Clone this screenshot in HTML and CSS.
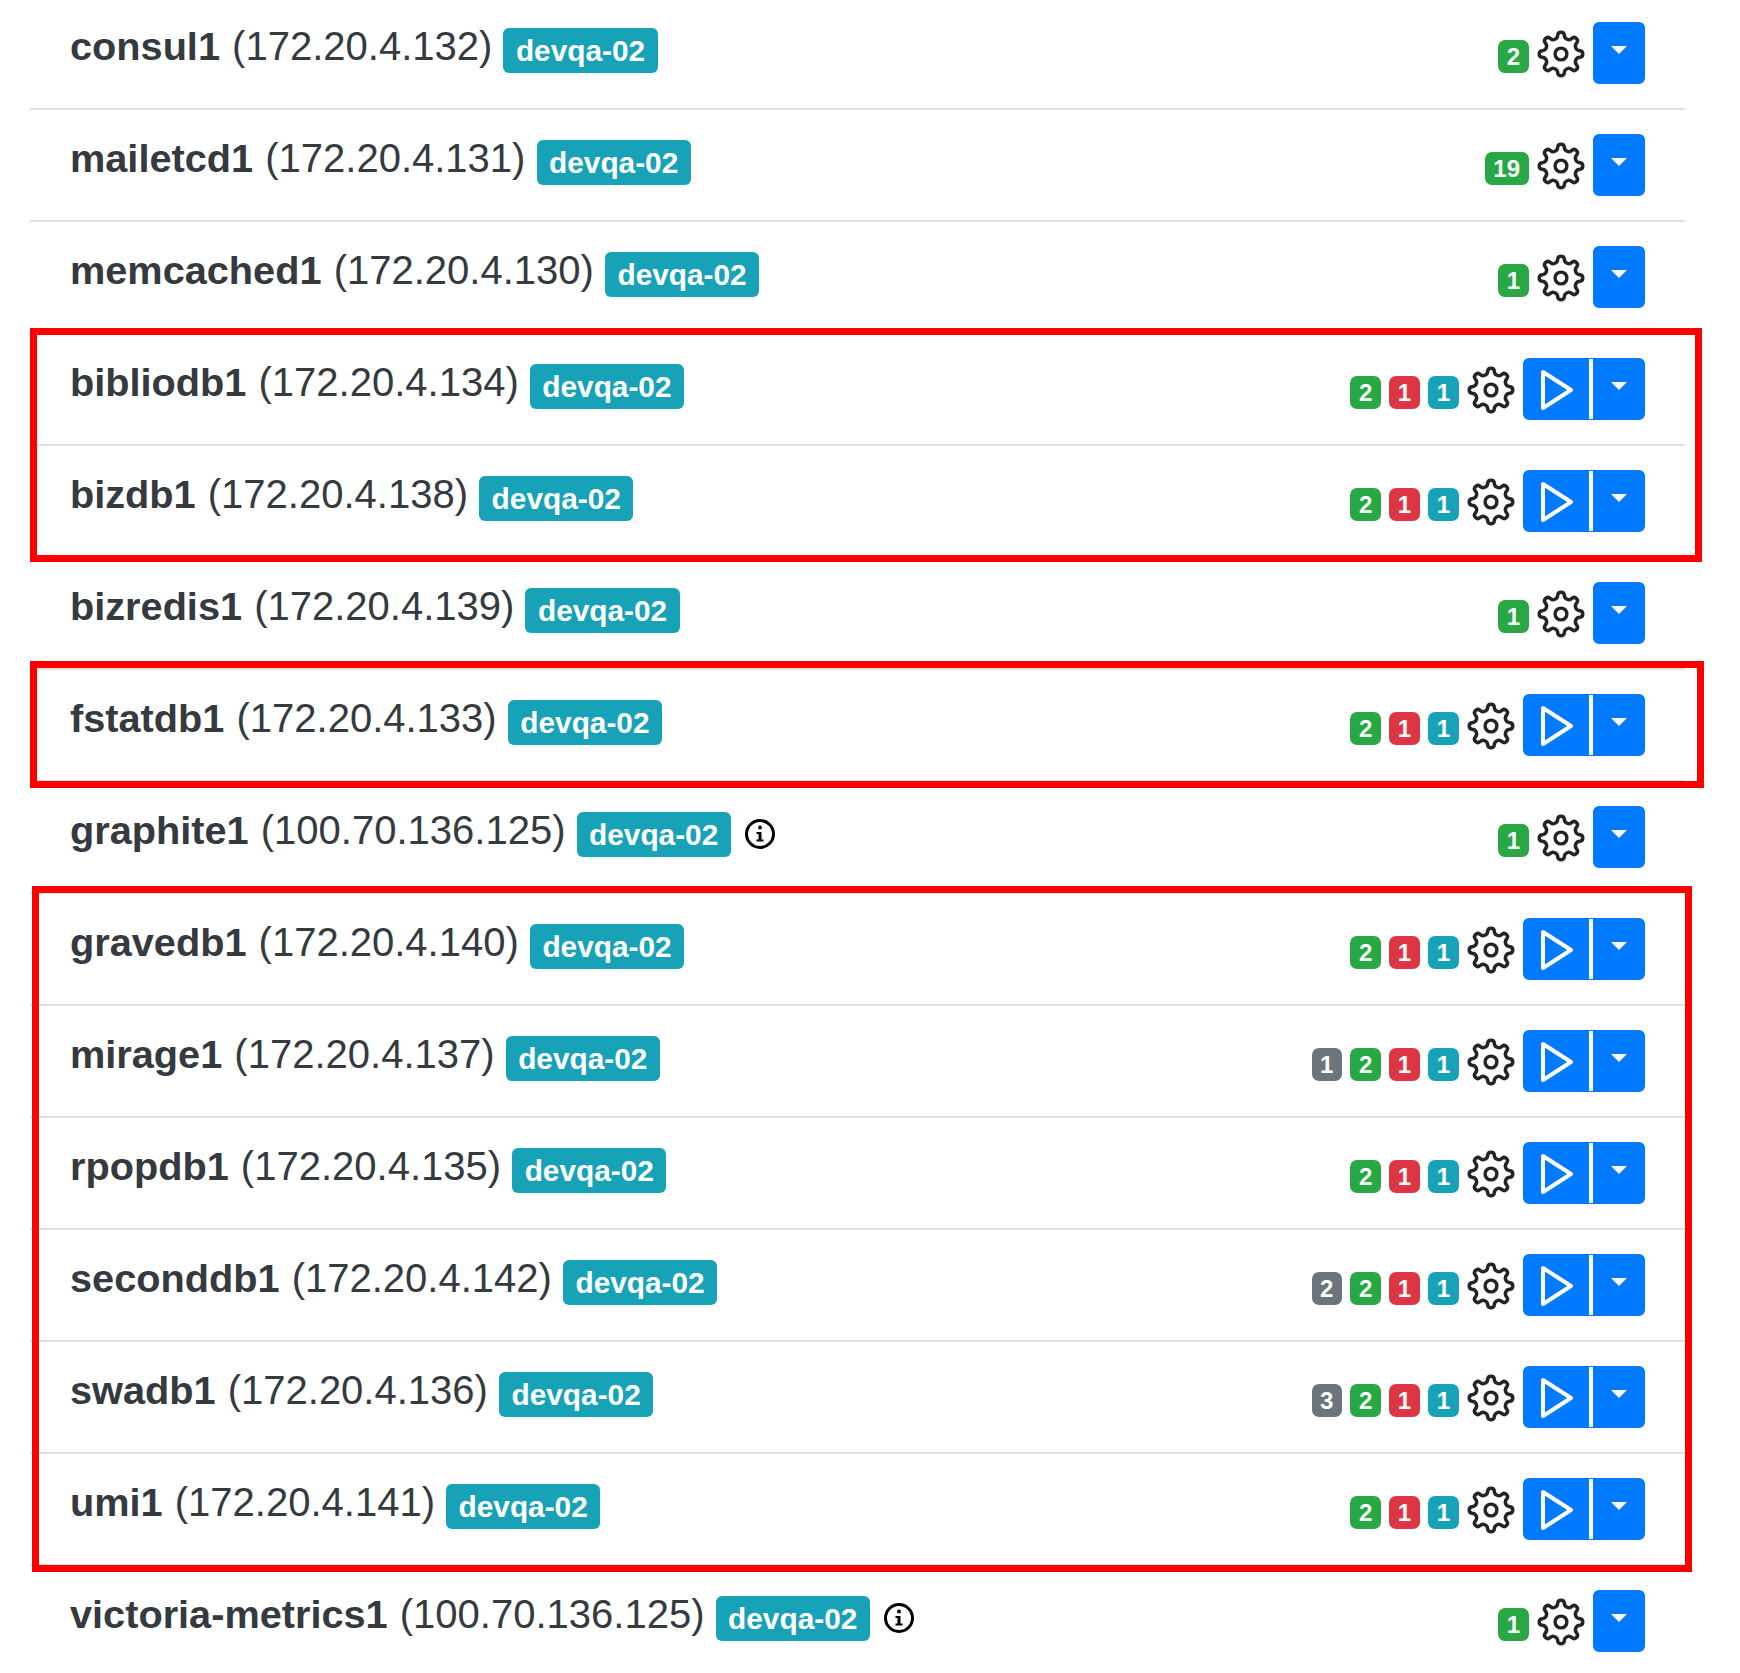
FILE: index.html
```html
<!DOCTYPE html>
<html lang="en">
<head>
  <meta charset="UTF-8">
  <title>Hosts</title>
  <link rel="stylesheet" href="styles.css">
</head>
<body>
  <svg class="defs" width="0" height="0">
    <symbol id="gear" viewBox="-10.4 -10.4 20.8 20.8">
      <path d="M-1.44 -8.17A1.45 1.45 0 0 1 1.44 -8.17A1.95 1.95 0 0 0 4.76 -6.8A1.45 1.45 0 0 1 6.8 -4.76A1.95 1.95 0 0 0 8.17 -1.44A1.45 1.45 0 0 1 8.17 1.44A1.95 1.95 0 0 0 6.8 4.76A1.45 1.45 0 0 1 4.76 6.8A1.95 1.95 0 0 0 1.44 8.17A1.45 1.45 0 0 1 -1.44 8.17A1.95 1.95 0 0 0 -4.76 6.8A1.45 1.45 0 0 1 -6.8 4.76A1.95 1.95 0 0 0 -8.17 1.44A1.45 1.45 0 0 1 -8.17 -1.44A1.95 1.95 0 0 0 -6.8 -4.76A1.45 1.45 0 0 1 -4.76 -6.8A1.95 1.95 0 0 0 -1.44 -8.17Z" fill="none" stroke="#212529" stroke-width="1.5"/>
      <circle r="2.55" fill="none" stroke="#212529" stroke-width="1.5"/>
    </symbol>
    <symbol id="play" viewBox="0 0 34 42">
      <path d="M3 3L31 21L3 39Z" fill="none" stroke="#fff" stroke-width="4" stroke-linejoin="round"/>
    </symbol>
    <symbol id="info" viewBox="0 0 32 32">
      <circle cx="16" cy="16" r="13.5" fill="none" stroke="#000" stroke-width="3"/>
      <circle cx="16" cy="9.5" r="2" fill="#000"/>
      <path d="M12.5 14H17.5V21.5H19.5V23.5H12.5V21.5H14.5V16H12.5Z" fill="#000"/>
    </symbol>
  </svg>

  <div class="page">
    <ul class="hosts">
      <li class="host">
        <div class="host-title"><b>consul1</b> (172.20.4.132) <span class="tag">devqa-02</span></div>
        <div class="host-actions">
          <span class="badge green">2</span>
          <svg class="gear"><use href="#gear"/></svg>
          <div class="btn-group"><span class="caret-btn"><i class="caret"></i></span></div>
        </div>
      </li>
      <li class="host">
        <div class="host-title"><b>mailetcd1</b> (172.20.4.131) <span class="tag">devqa-02</span></div>
        <div class="host-actions">
          <span class="badge green">19</span>
          <svg class="gear"><use href="#gear"/></svg>
          <div class="btn-group"><span class="caret-btn"><i class="caret"></i></span></div>
        </div>
      </li>
      <li class="host">
        <div class="host-title"><b>memcached1</b> (172.20.4.130) <span class="tag">devqa-02</span></div>
        <div class="host-actions">
          <span class="badge green">1</span>
          <svg class="gear"><use href="#gear"/></svg>
          <div class="btn-group"><span class="caret-btn"><i class="caret"></i></span></div>
        </div>
      </li>
      <li class="host">
        <div class="host-title"><b>bibliodb1</b> (172.20.4.134) <span class="tag">devqa-02</span></div>
        <div class="host-actions">
          <span class="badge green">2</span><span class="badge red">1</span><span class="badge teal">1</span>
          <svg class="gear"><use href="#gear"/></svg>
          <div class="btn-group"><span class="play-btn"><svg class="play"><use href="#play"/></svg></span><span class="split"></span><span class="caret-btn"><i class="caret"></i></span></div>
        </div>
      </li>
      <li class="host">
        <div class="host-title"><b>bizdb1</b> (172.20.4.138) <span class="tag">devqa-02</span></div>
        <div class="host-actions">
          <span class="badge green">2</span><span class="badge red">1</span><span class="badge teal">1</span>
          <svg class="gear"><use href="#gear"/></svg>
          <div class="btn-group"><span class="play-btn"><svg class="play"><use href="#play"/></svg></span><span class="split"></span><span class="caret-btn"><i class="caret"></i></span></div>
        </div>
      </li>
      <li class="host">
        <div class="host-title"><b>bizredis1</b> (172.20.4.139) <span class="tag">devqa-02</span></div>
        <div class="host-actions">
          <span class="badge green">1</span>
          <svg class="gear"><use href="#gear"/></svg>
          <div class="btn-group"><span class="caret-btn"><i class="caret"></i></span></div>
        </div>
      </li>
      <li class="host">
        <div class="host-title"><b>fstatdb1</b> (172.20.4.133) <span class="tag">devqa-02</span></div>
        <div class="host-actions">
          <span class="badge green">2</span><span class="badge red">1</span><span class="badge teal">1</span>
          <svg class="gear"><use href="#gear"/></svg>
          <div class="btn-group"><span class="play-btn"><svg class="play"><use href="#play"/></svg></span><span class="split"></span><span class="caret-btn"><i class="caret"></i></span></div>
        </div>
      </li>
      <li class="host">
        <div class="host-title"><b>graphite1</b> (100.70.136.125) <span class="tag">devqa-02</span><svg class="info"><use href="#info"/></svg></div>
        <div class="host-actions">
          <span class="badge green">1</span>
          <svg class="gear"><use href="#gear"/></svg>
          <div class="btn-group"><span class="caret-btn"><i class="caret"></i></span></div>
        </div>
      </li>
      <li class="host">
        <div class="host-title"><b>gravedb1</b> (172.20.4.140) <span class="tag">devqa-02</span></div>
        <div class="host-actions">
          <span class="badge green">2</span><span class="badge red">1</span><span class="badge teal">1</span>
          <svg class="gear"><use href="#gear"/></svg>
          <div class="btn-group"><span class="play-btn"><svg class="play"><use href="#play"/></svg></span><span class="split"></span><span class="caret-btn"><i class="caret"></i></span></div>
        </div>
      </li>
      <li class="host">
        <div class="host-title"><b>mirage1</b> (172.20.4.137) <span class="tag">devqa-02</span></div>
        <div class="host-actions">
          <span class="badge grey">1</span><span class="badge green">2</span><span class="badge red">1</span><span class="badge teal">1</span>
          <svg class="gear"><use href="#gear"/></svg>
          <div class="btn-group"><span class="play-btn"><svg class="play"><use href="#play"/></svg></span><span class="split"></span><span class="caret-btn"><i class="caret"></i></span></div>
        </div>
      </li>
      <li class="host">
        <div class="host-title"><b>rpopdb1</b> (172.20.4.135) <span class="tag">devqa-02</span></div>
        <div class="host-actions">
          <span class="badge green">2</span><span class="badge red">1</span><span class="badge teal">1</span>
          <svg class="gear"><use href="#gear"/></svg>
          <div class="btn-group"><span class="play-btn"><svg class="play"><use href="#play"/></svg></span><span class="split"></span><span class="caret-btn"><i class="caret"></i></span></div>
        </div>
      </li>
      <li class="host">
        <div class="host-title"><b>seconddb1</b> (172.20.4.142) <span class="tag">devqa-02</span></div>
        <div class="host-actions">
          <span class="badge grey">2</span><span class="badge green">2</span><span class="badge red">1</span><span class="badge teal">1</span>
          <svg class="gear"><use href="#gear"/></svg>
          <div class="btn-group"><span class="play-btn"><svg class="play"><use href="#play"/></svg></span><span class="split"></span><span class="caret-btn"><i class="caret"></i></span></div>
        </div>
      </li>
      <li class="host">
        <div class="host-title"><b>swadb1</b> (172.20.4.136) <span class="tag">devqa-02</span></div>
        <div class="host-actions">
          <span class="badge grey">3</span><span class="badge green">2</span><span class="badge red">1</span><span class="badge teal">1</span>
          <svg class="gear"><use href="#gear"/></svg>
          <div class="btn-group"><span class="play-btn"><svg class="play"><use href="#play"/></svg></span><span class="split"></span><span class="caret-btn"><i class="caret"></i></span></div>
        </div>
      </li>
      <li class="host">
        <div class="host-title"><b>umi1</b> (172.20.4.141) <span class="tag">devqa-02</span></div>
        <div class="host-actions">
          <span class="badge green">2</span><span class="badge red">1</span><span class="badge teal">1</span>
          <svg class="gear"><use href="#gear"/></svg>
          <div class="btn-group"><span class="play-btn"><svg class="play"><use href="#play"/></svg></span><span class="split"></span><span class="caret-btn"><i class="caret"></i></span></div>
        </div>
      </li>
      <li class="host">
        <div class="host-title"><b>victoria-metrics1</b> (100.70.136.125) <span class="tag">devqa-02</span><svg class="info"><use href="#info"/></svg></div>
        <div class="host-actions">
          <span class="badge green">1</span>
          <svg class="gear"><use href="#gear"/></svg>
          <div class="btn-group"><span class="caret-btn"><i class="caret"></i></span></div>
        </div>
      </li>
    </ul>

    <div class="mark mark-a"></div>
    <div class="mark mark-b"></div>
    <div class="mark mark-c"></div>
  </div>
</body>
</html>
```

FILE: styles.css
```css
* { margin: 0; padding: 0; box-sizing: border-box; }
body {
  background: #fff;
  color: #343a40;
  font-family: "Liberation Sans", Arial, sans-serif;
}
.defs { position: absolute; }
.page {
  position: relative;
  height: 1673px;
  overflow: hidden;
}
.hosts {
  list-style: none;
  margin: -2px 55px 0 30px;
}
.host {
  display: flex;
  justify-content: space-between;
  align-items: flex-start;
  padding: 24px 40px;
  height: 112px;
  border-bottom: 2px solid #dfdfdf;
}
.host:last-child {
  height: 109px;
  padding-bottom: 21px;
  border-bottom: 0;
}
.host-title {
  display: flex;
  align-items: baseline;
  white-space: pre-wrap;
  font-size: 40px;
  line-height: 48px;
}
.host-title b {
  margin-right: 1px;
  font-size: 39.7px;
}
.tag {
  align-self: flex-start;
  margin: 6px 0 0 0;
  padding: 0 12.5px;
  height: 45px;
  line-height: 46px;
  border-radius: 6px;
  background: #17a2b8;
  color: #fff;
  font-size: 29.8px;
  font-weight: bold;
}
.info {
  align-self: flex-start;
  width: 32px;
  height: 32px;
  margin: 12px 0 0 13px;
}
.host-actions {
  display: flex;
  align-items: flex-start;
}
.badge {
  min-width: 30px;
  height: 33px;
  margin: 18px 8.5px 0 0;
  padding: 0 8.5px;
  border-radius: 7px;
  color: #fff;
  font-size: 24px;
  font-weight: bold;
  line-height: 33px;
  text-align: center;
}
.green { background: #28a745; }
.red { background: #dc3545; }
.teal { background: #17a2b8; }
.grey { background: #6c757d; }
.gear {
  width: 48px;
  height: 48px;
  margin: 8px 8px 0 0;
}
.btn-group {
  display: flex;
  height: 62px;
  border-radius: 6px;
  background: #007bff;
}
.play-btn {
  display: flex;
  align-items: center;
  width: 66px;
  padding-left: 17px;
}
.play {
  width: 34px;
  height: 42px;
  margin-top: 2px;
}
.split {
  width: 4px;
  height: 60px;
  margin-top: 1px;
  background: #fff;
}
.caret-btn {
  display: flex;
  justify-content: center;
  width: 52px;
  padding-top: 24px;
}
.caret {
  width: 0;
  height: 0;
  border-top: 8px solid #fff;
  border-left: 8px solid transparent;
  border-right: 8px solid transparent;
}
.mark {
  position: absolute;
  border: 7px solid #f00;
}
.mark-a { left: 30px; top: 328px; width: 1672px; height: 234px; }
.mark-b { left: 30px; top: 661px; width: 1674px; height: 127px; }
.mark-c { left: 32px; top: 886px; width: 1660px; height: 686px; }
```
